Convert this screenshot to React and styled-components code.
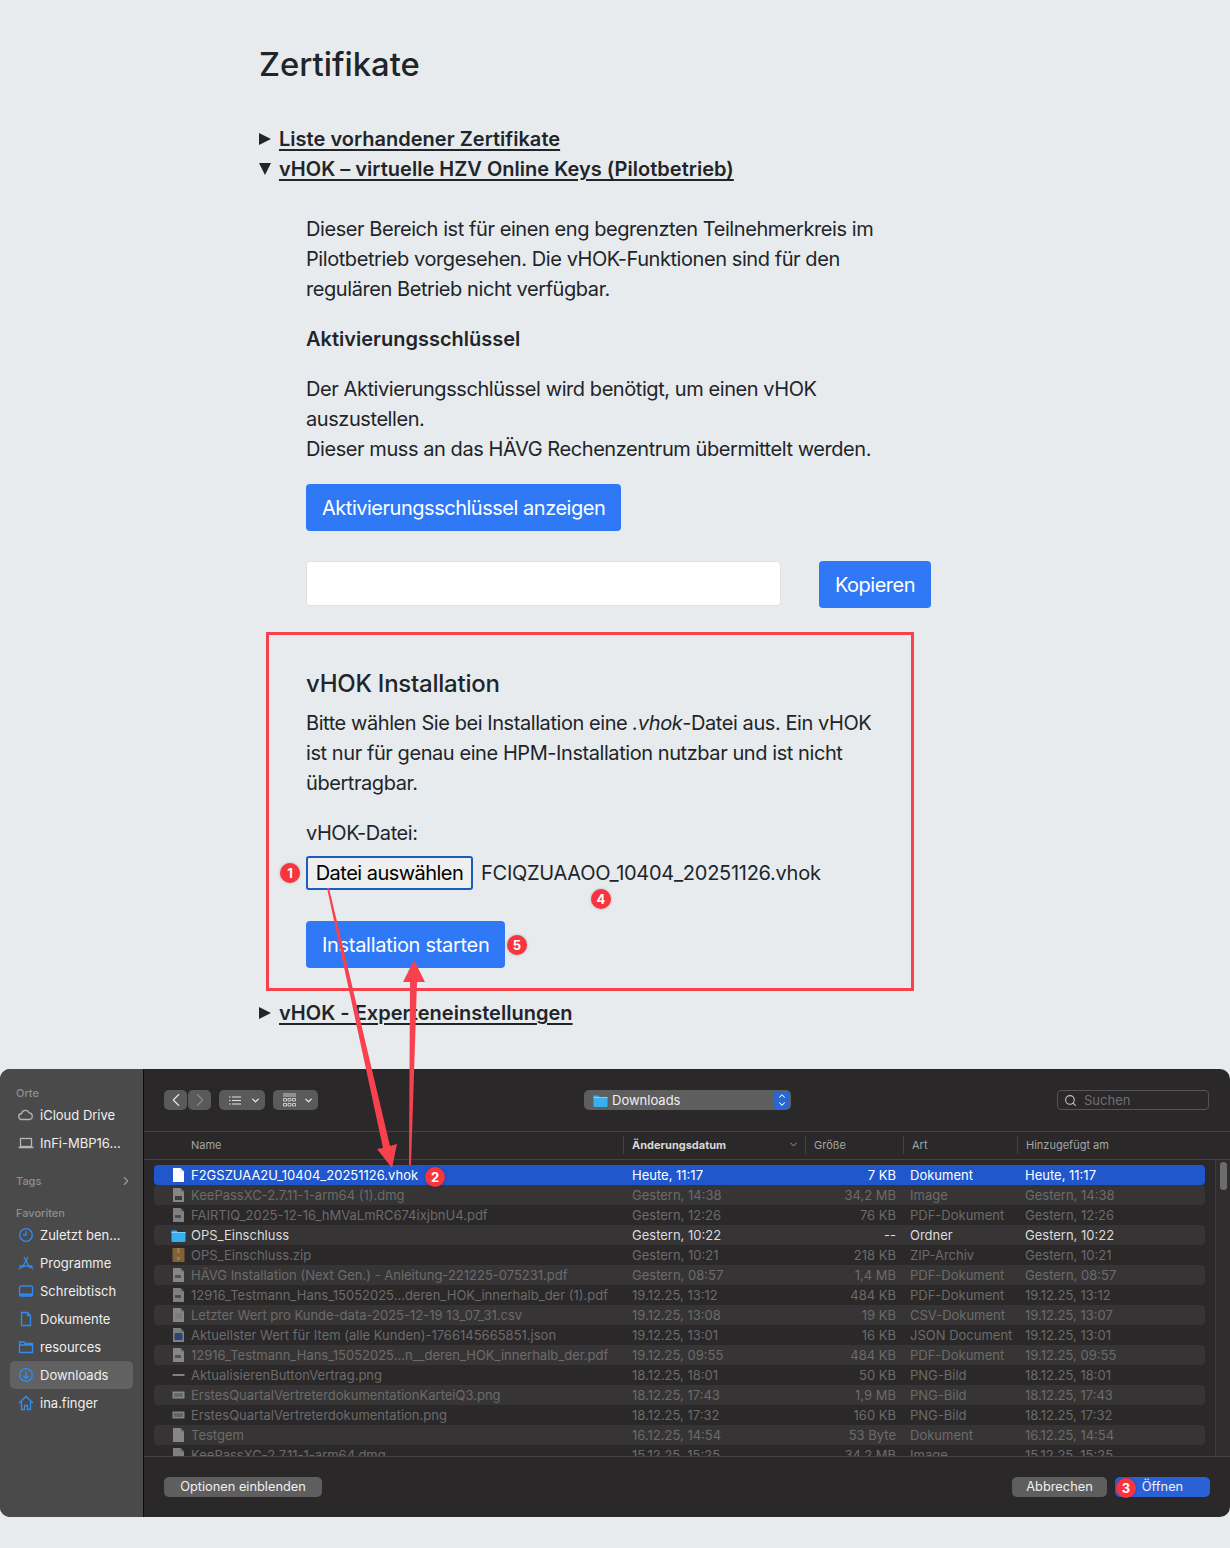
import React from 'react'
import styled, { createGlobalStyle } from 'styled-components'
import { ChevronLeft, ChevronRight, ChevronDown, ChevronUp, Search } from 'lucide-react'

const GlobalStyle = createGlobalStyle`
  html, body {
    margin: 0;
    padding: 0;
    background: #e7ebee;
  }
  * { box-sizing: border-box; }
`

const Page = styled.div`
  position: relative;
  width: 1230px;
  height: 1548px;
  overflow: hidden;
  background: #e7ebee;
  color: #212529;
  font-family: Inter, 'Noto Sans', sans-serif;
  font-size: 20px;
  line-height: 30px;
  letter-spacing: -0.43px;
`

const Content = styled.main`
  width: 672px;
  margin-left: 259px;
  padding-top: 45px;
`

const Title = styled.h1`
  margin: 0 0 41px;
  font-size: 32.8px;
  line-height: 38px;
  font-weight: 500;
  letter-spacing: 0;
`

const Summary = styled.div`
  display: flex;
  align-items: center;
  height: 30px;
  margin-top: ${p => p.$top || 0}px;
  font-weight: 600;
  letter-spacing: 0.02px;
  text-decoration: underline;
  text-underline-offset: 3px;
`

const Triangle = styled.span`
  flex: none;
  width: 20px;
  height: 14px;
  &::before {
    content: '';
    display: block;
    width: 0;
    height: 0;
    ${p => p.$open
      ? `margin-top: 1px; border-left: 6.5px solid transparent; border-right: 6.5px solid transparent; border-top: 12px solid #212529;`
      : `margin-top: 1px; border-top: 6.5px solid transparent; border-bottom: 6.5px solid transparent; border-left: 12px solid #212529;`}
  }
`

const Details = styled.section`
  padding: 30px 0 0 47px;
`

const Para = styled.p`
  max-width: 580px;
  margin: ${p => p.$top || 0}px 0 0;
`

const SubHead = styled.h4`
  margin: 20px 0 0;
  font-size: 20px;
  line-height: 30px;
  font-weight: 600;
  letter-spacing: 0;
`

const Heading = styled.h3`
  margin: ${p => p.$top || 0}px 0 10px;
  font-size: 24px;
  line-height: 29px;
  font-weight: 500;
  letter-spacing: -0.24px;
`

const Button = styled.button`
  display: block;
  height: 47px;
  margin: ${p => p.$top || 0}px 0 0;
  padding: 0 16px;
  border: 0;
  border-radius: 4px;
  background: #2f79f7;
  color: #fff;
  font: inherit;
  letter-spacing: ${p => p.$spacing ?? -0.48}px;
`

const CopyRow = styled.div`
  display: flex;
  align-items: flex-start;
  margin-top: 30px;
`

const KeyInput = styled.div`
  width: 475px;
  height: 45px;
  border: 1px solid #dee2e6;
  border-radius: 4px;
  background: #fff;
`

const CopyButton = styled(Button)`
  width: 112px;
  margin-left: 38px;
  padding: 0;
`

const FileRow = styled.div`
  display: flex;
  align-items: center;
  height: 34px;
  margin-top: 8px;
`

const FileButton = styled.button`
  width: 167px;
  height: 34px;
  padding: 0;
  border: 2px solid #1a5cc0;
  border-radius: 3px;
  background: #efefef;
  color: #000;
  font: inherit;
  letter-spacing: -0.53px;
`

const FileName = styled.span`
  margin-left: 8px;
  letter-spacing: -0.27px;
`

/* file dialog */

const Dialog = styled.div`
  display: flex;
  height: 448px;
  margin-top: 41px;
  overflow: hidden;
  border-radius: 10px;
  background: #2a2829;
  font-size: 13px;
  line-height: 16px;
  letter-spacing: 0;
`

const Sidebar = styled.aside`
  flex: none;
  width: 144px;
  padding: 16px 10px 0;
  border-right: 1px solid #0b0b0b;
  background: #4a4a4a;
  color: #efefef;
`

const SideLabel = styled.div`
  display: flex;
  justify-content: space-between;
  align-items: center;
  height: 16px;
  margin: ${p => p.$top || 0}px 0 0 6px;
  color: #8f8f8f;
  font-size: 11px;
  font-weight: 500;
`

const SideItem = styled.div`
  display: flex;
  align-items: center;
  gap: 6px;
  height: 28px;
  padding-left: 8px;
  border-radius: 5px;
  background: ${p => (p.$active ? '#616161' : 'transparent')};
  white-space: nowrap;
`

const SideIcon = styled.svg`
  flex: none;
  width: 16px;
  height: 16px;
  fill: none;
  stroke: ${p => p.$color || '#2e8df5'};
  stroke-width: 1.3;
`

const Main = styled.div`
  flex: 1;
  min-width: 0;
  display: flex;
  flex-direction: column;
`

const Toolbar = styled.div`
  flex: none;
  display: flex;
  align-items: center;
  height: 63px;
  padding: 0 21px 0 20px;
  border-bottom: 1px solid #444243;
`

const ToolGroup = styled.div`
  display: flex;
  width: ${p => p.$w}px;
  gap: ${p => p.$gap || 0}px;
  margin-left: ${p => p.$left || 0}px;
`

const ToolButton = styled.div`
  display: flex;
  align-items: center;
  justify-content: center;
  gap: ${p => p.$gap || 0}px;
  flex: 1;
  height: 20px;
  padding-left: ${p => (p.$menu ? 6 : 0)}px;
  border-radius: 5px;
  background: #5b5a5a;
  color: ${p => (p.$dim ? '#8a8a8a' : '#e8e8e8')};
`

const Lines = styled.svg`
  flex: none;
  width: ${p => p.$w}px;
  height: ${p => p.$h}px;
  stroke: #e4e4e4;
  fill: none;
`

const PathPopup = styled.div`
  display: flex;
  align-items: center;
  gap: 4px;
  width: 207px;
  height: 20px;
  margin-left: 266px;
  padding-left: 9px;
  border-radius: 5px;
  background: #5f5e5e;
  color: #efefef;
`

const Stepper = styled.div`
  display: flex;
  flex-direction: column;
  align-items: center;
  justify-content: center;
  width: 17px;
  height: 18px;
  margin-left: auto;
  margin-right: 1px;
  border-radius: 4px;
  background: #2a66d0;
  color: #fff;
  line-height: 0;
  svg {
    margin: -1px 0;
  }
`

const SearchBox = styled.div`
  display: flex;
  align-items: center;
  gap: 7px;
  width: 152px;
  height: 20px;
  margin-left: auto;
  padding-left: 6px;
  border: 1px solid #555354;
  border-radius: 4px;
  color: #6f6f6f;
  font-size: 13px;
`

const ColumnHead = styled.div`
  flex: none;
  display: grid;
  grid-template-columns: 47px 432px 182px 98px 114px 1fr;
  height: 28px;
  padding-bottom: 2px;
  align-items: center;
  border-bottom: 1px solid #444243;
  color: #a5a5a5;
  font-size: 11px;
`

const HeadCell = styled.div`
  display: flex;
  align-items: center;
  justify-content: space-between;
  height: 18px;
  padding: 0 6px 0 ${p => (p.$plain ? 0 : 8)}px;
  border-left: ${p => (p.$plain ? 0 : '1px solid #444243')};
  color: ${p => (p.$sorted ? '#d8d8d8' : 'inherit')};
  font-weight: ${p => (p.$sorted ? 700 : 400)};
`

const ListArea = styled.div`
  flex: 1;
  min-height: 0;
  display: flex;
  border-bottom: 1px solid #444243;
`

const Rows = styled.div`
  flex: 1;
  min-width: 0;
  overflow: hidden;
  padding: 5px 10px 0;
`

const Scroller = styled.div`
  flex: none;
  width: 15px;
  padding: 2px 0 0 4px;
  border-left: 1px solid #3e3c3d;
  background: #2f2d2e;
`

const Thumb = styled.div`
  width: 7px;
  height: 28px;
  border-radius: 4px;
  background: #6d6c6c;
`

const Row = styled.div`
  display: grid;
  grid-template-columns: 37px 441px 174px 90px 129px 1fr;
  align-items: center;
  height: 20px;
  border-radius: 4px;
  white-space: nowrap;
  background: ${p => (p.$selected ? '#2157cc' : p.$stripe ? '#363435' : 'transparent')};
  color: ${p => (p.$selected ? '#fff' : p.$folder ? '#dcdcdc' : '#6c6b6b')};
`

const RowIcon = styled.svg`
  display: block;
  flex: none;
  width: 15px;
  height: 16px;
  margin-left: ${p => (p.$flush ? 0 : 17)}px;
  opacity: ${p => (p.$bright ? 1 : 0.5)};
`

const SizeCell = styled.div`
  text-align: right;
`

const KindCell = styled.div`
  padding-left: 14px;
`

const Footer = styled.div`
  flex: none;
  display: flex;
  align-items: center;
  gap: 8px;
  height: 60px;
  padding: 0 20px;
`

const FootButton = styled.div`
  display: flex;
  align-items: center;
  justify-content: center;
  width: ${p => p.$w}px;
  height: 20px;
  padding-bottom: 1px;
  margin-right: ${p => (p.$push ? 'auto' : 0)};
  border-radius: 5px;
  background: ${p => (p.$primary ? '#2b60d6' : '#5f5e5e')};
  color: #f0f0f0;
  font-size: 12.8px;
`

/* red annotations drawn over the page */

const Marks = styled.svg`
  position: absolute;
  inset: 0;
  width: 1230px;
  height: 1548px;
  pointer-events: none;
`

const RedBox = styled.div`
  position: absolute;
  left: 266px;
  top: 632px;
  width: 648px;
  height: 359px;
  border: 3px solid #f8414f;
  pointer-events: none;
`

const Badge = styled.span`
  position: absolute;
  left: ${p => p.$x - 10}px;
  top: ${p => p.$y - 10}px;
  display: flex;
  align-items: center;
  justify-content: center;
  width: 20px;
  height: 20px;
  border-radius: 50%;
  background: #f8343f;
  box-shadow: 0 0 3px rgba(0, 0, 0, 0.25);
  color: #fff;
  font-size: 13px;
  line-height: 1;
  font-weight: 700;
  letter-spacing: 0;
`

function FileIcon({ kind, bright, flush }) {
  if (kind === 'folder') {
    return (
      <RowIcon viewBox="0 0 15 16" $bright $flush={flush}>
        <path d="M0.5 3.5 h5 l1 1.5 h8 v9 a1 1 0 0 1 -1 1 h-12 a1 1 0 0 1 -1 -1 z" fill="#36b0ee" />
        <rect x="0.5" y="5" width="14" height="1" fill="#7cd2f7" />
      </RowIcon>
    )
  }
  if (kind === 'zip') {
    return (
      <RowIcon viewBox="0 0 15 16">
        <rect x="1.5" y="1" width="12" height="14" fill="#d99a45" />
        <rect x="6" y="1" width="3" height="5" fill="#f5d08a" />
        <rect x="6" y="10" width="3" height="3" fill="#f5d08a" />
      </RowIcon>
    )
  }
  if (kind === 'strip') {
    return (
      <RowIcon viewBox="0 0 15 16">
        <rect x="1.5" y="7" width="12" height="2" fill="#d8d8d8" />
      </RowIcon>
    )
  }
  if (kind === 'png') {
    return (
      <RowIcon viewBox="0 0 15 16">
        <rect x="1.5" y="4.5" width="12" height="7" fill="#e0e0e0" />
        <rect x="3" y="6" width="9" height="4" fill="#8fa69a" />
      </RowIcon>
    )
  }
  return (
    <RowIcon viewBox="0 0 15 16" $bright={bright}>
      <path d="M2 1 h7.5 l3.5 3.5 v10.5 h-11 z" fill={bright ? '#fff' : '#d8d8d8'} />
      <path d="M9.5 1 l3.5 3.5 h-3.5 z" fill={bright ? '#c9d6f2' : '#a8a8a8'} />
      {kind === 'pdf' && <rect x="4" y="8" width="6" height="3" fill="#5e6f96" />}
      {kind === 'dmg' && <rect x="4" y="9" width="7" height="4" fill="#444" />}
      {kind === 'csv' && <path d="M4 7 h7 M4 9 h7 M4 11 h7" stroke="#a5a5a5" strokeWidth="0.8" />}
      {kind === 'json' && <rect x="3.5" y="6" width="8" height="7" rx="1" fill="#2a66d0" />}
    </RowIcon>
  )
}

const files = [
  ['doc', 'F2GSZUAA2U_10404_20251126.vhok', 'Heute, 11:17', '7 KB', 'Dokument', 'Heute, 11:17'],
  ['dmg', 'KeePassXC-2.7.11-1-arm64 (1).dmg', 'Gestern, 14:38', '34,2 MB', 'Image', 'Gestern, 14:38'],
  ['pdf', 'FAIRTIQ_2025-12-16_hMVaLmRC674ixjbnU4.pdf', 'Gestern, 12:26', '76 KB', 'PDF-Dokument', 'Gestern, 12:26'],
  ['folder', 'OPS_Einschluss', 'Gestern, 10:22', '--', 'Ordner', 'Gestern, 10:22'],
  ['zip', 'OPS_Einschluss.zip', 'Gestern, 10:21', '218 KB', 'ZIP-Archiv', 'Gestern, 10:21'],
  ['pdf', 'HÄVG Installation (Next Gen.) - Anleitung-221225-075231.pdf', 'Gestern, 08:57', '1,4 MB', 'PDF-Dokument', 'Gestern, 08:57'],
  ['pdf', '12916_Testmann_Hans_15052025...deren_HOK_innerhalb_der (1).pdf', '19.12.25, 13:12', '484 KB', 'PDF-Dokument', '19.12.25, 13:12'],
  ['csv', 'Letzter Wert pro Kunde-data-2025-12-19 13_07_31.csv', '19.12.25, 13:08', '19 KB', 'CSV-Dokument', '19.12.25, 13:07'],
  ['json', 'Aktuellster Wert für Item (alle Kunden)-1766145665851.json', '19.12.25, 13:01', '16 KB', 'JSON Document', '19.12.25, 13:01'],
  ['pdf', '12916_Testmann_Hans_15052025...n__deren_HOK_innerhalb_der.pdf', '19.12.25, 09:55', '484 KB', 'PDF-Dokument', '19.12.25, 09:55'],
  ['strip', 'AktualisierenButtonVertrag.png', '18.12.25, 18:01', '50 KB', 'PNG-Bild', '18.12.25, 18:01'],
  ['png', 'ErstesQuartalVertreterdokumentationKarteiQ3.png', '18.12.25, 17:43', '1,9 MB', 'PNG-Bild', '18.12.25, 17:43'],
  ['png', 'ErstesQuartalVertreterdokumentation.png', '18.12.25, 17:32', '160 KB', 'PNG-Bild', '18.12.25, 17:32'],
  ['doc', 'Testgem', '16.12.25, 14:54', '53 Byte', 'Dokument', '16.12.25, 14:54'],
  ['dmg', 'KeePassXC-2.7.11-1-arm64.dmg', '15.12.25, 15:25', '34,2 MB', 'Image', '15.12.25, 15:25'],
]

function FileDialog() {
  return (
    <Dialog>
      <Sidebar>
        <SideLabel>Orte</SideLabel>
        <SideItem>
          <SideIcon viewBox="0 0 16 16" $color="#b5b5b5">
            <path d="M4 12.5 a3 3 0 0 1 -.4 -6 a4 4 0 0 1 7.6 -.6 a3.4 3.4 0 0 1 .8 6.6 z" />
          </SideIcon>
          iCloud Drive
        </SideItem>
        <SideItem>
          <SideIcon viewBox="0 0 16 16" $color="#b5b5b5">
            <rect x="2.5" y="3.5" width="11" height="8" />
            <path d="M0.5 12.5 h15" />
          </SideIcon>
          InFi-MBP16...
        </SideItem>
        <SideLabel $top={16}>
          Tags
          <ChevronRight size={14} color="#9a9a9a" />
        </SideLabel>
        <SideLabel $top={16}>Favoriten</SideLabel>
        <SideItem>
          <SideIcon viewBox="0 0 16 16">
            <circle cx="8" cy="8" r="6.3" />
            <path d="M8 4 v4 h-3" />
          </SideIcon>
          Zuletzt ben...
        </SideItem>
        <SideItem>
          <SideIcon viewBox="0 0 16 16">
            <path d="M6 2 L12 13 M10 2 L4 13 M1.5 11 h13 M1 14 l2 -2 M15 14 l-2 -2" />
          </SideIcon>
          Programme
        </SideItem>
        <SideItem>
          <SideIcon viewBox="0 0 16 16">
            <rect x="1.5" y="3" width="13" height="10" rx="1.5" />
            <rect x="2" y="10.5" width="12" height="2" fill="#2e8df5" stroke="none" />
          </SideIcon>
          Schreibtisch
        </SideItem>
        <SideItem>
          <SideIcon viewBox="0 0 16 16">
            <path d="M3.5 1.5 h6 l3 3 v10 h-9 z M9.5 1.5 v3 h3" />
          </SideIcon>
          Dokumente
        </SideItem>
        <SideItem>
          <SideIcon viewBox="0 0 16 16">
            <path d="M1.5 3 h4.5 l1 1.5 h7.5 v9 h-13 z M1.5 6 h13" />
          </SideIcon>
          resources
        </SideItem>
        <SideItem $active>
          <SideIcon viewBox="0 0 16 16">
            <circle cx="8" cy="8" r="6.3" />
            <path d="M8 4.5 v7 M5.5 9 l2.5 2.5 l2.5 -2.5" />
          </SideIcon>
          Downloads
        </SideItem>
        <SideItem>
          <SideIcon viewBox="0 0 16 16">
            <path d="M1 8 L8 1.5 L15 8 M3.5 6.5 v8 h3 v-4 h3 v4 h3 v-8" />
          </SideIcon>
          ina.finger
        </SideItem>
      </Sidebar>
      <Main>
        <Toolbar>
          <ToolGroup $w={47} $gap={1}>
            <ToolButton><ChevronLeft size={22} strokeWidth={1.2} /></ToolButton>
            <ToolButton $dim><ChevronRight size={22} strokeWidth={1.2} /></ToolButton>
          </ToolGroup>
          <ToolGroup $w={46} $left={8}>
            <ToolButton $menu $gap={9}>
              <Lines viewBox="0 0 12 9" $w={12} $h={9}>
                <path d="M3 1 h9 M3 4.5 h9 M3 8 h9 M0 1 h1.5 M0 4.5 h1.5 M0 8 h1.5" />
              </Lines>
              <ChevronDown size={11} strokeWidth={3} />
            </ToolButton>
          </ToolGroup>
          <ToolGroup $w={45} $left={8}>
            <ToolButton $menu $gap={6.5}>
              <Lines viewBox="0 0 13 14" $w={13} $h={14} strokeWidth="0.8">
                <path d="M0 1 h13 M0 3 h13 M0.5 5.5 h3 v2.5 h-3 z M5 5.5 h3 v2.5 h-3 z M9.5 5.5 h3 v2.5 h-3 z M0.5 10.5 h3 v2.5 h-3 z M5 10.5 h3 v2.5 h-3 z M9.5 10.5 h3 v2.5 h-3 z" />
              </Lines>
              <ChevronDown size={11} strokeWidth={3} />
            </ToolButton>
          </ToolGroup>
          <PathPopup>
            <FileIcon kind="folder" flush />
            Downloads
            <Stepper>
              <ChevronUp size={10} strokeWidth={2.5} />
              <ChevronDown size={10} strokeWidth={2.5} />
            </Stepper>
          </PathPopup>
          <SearchBox>
            <Search size={13} color="#c4c4c4" />
            Suchen
          </SearchBox>
        </Toolbar>
        <ColumnHead>
          <span />
          <HeadCell $plain>Name</HeadCell>
          <HeadCell $sorted>
            Änderungsdatum
            <ChevronDown size={11} color="#a5a5a5" />
          </HeadCell>
          <HeadCell>Größe</HeadCell>
          <HeadCell>Art</HeadCell>
          <HeadCell>Hinzugefügt am</HeadCell>
        </ColumnHead>
        <ListArea>
          <Rows>
            {files.map(([kind, name, date, size, type, added], i) => (
              <Row key={name} $selected={i === 0} $stripe={i % 2 === 1} $folder={kind === 'folder'}>
                <FileIcon kind={kind} bright={i === 0} />
                <div>{name}</div>
                <div>{date}</div>
                <SizeCell>{size}</SizeCell>
                <KindCell>{type}</KindCell>
                <div>{added}</div>
              </Row>
            ))}
          </Rows>
          <Scroller>
            <Thumb />
          </Scroller>
        </ListArea>
        <Footer>
          <FootButton $w={158} $push>Optionen einblenden</FootButton>
          <FootButton $w={95}>Abbrechen</FootButton>
          <FootButton $w={95} $primary>Öffnen</FootButton>
        </Footer>
      </Main>
    </Dialog>
  )
}

export default function App() {
  return (
    <Page>
      <GlobalStyle />
      <Content>
        <Title>Zertifikate</Title>
        <Summary><Triangle />Liste vorhandener Zertifikate</Summary>
        <Summary><Triangle $open />vHOK – virtuelle HZV Online Keys (Pilotbetrieb)</Summary>
        <Details>
          <Para>Dieser Bereich ist für einen eng begrenzten Teilnehmerkreis im Pilotbetrieb vorgesehen. Die vHOK-Funktionen sind für den regulären Betrieb nicht verfügbar.</Para>
          <SubHead>Aktivierungsschlüssel</SubHead>
          <Para $top={20}>
            Der Aktivierungsschlüssel wird benötigt, um einen vHOK auszustellen.
            <br />
            Dieser muss an das HÄVG Rechenzentrum übermittelt werden.
          </Para>
          <Button $top={20}>Aktivierungsschlüssel anzeigen</Button>
          <CopyRow>
            <KeyInput />
            <CopyButton>Kopieren</CopyButton>
          </CopyRow>
          <Heading $top={61}>vHOK Installation</Heading>
          <Para>Bitte wählen Sie bei Installation eine <em>.vhok</em>-Datei aus. Ein vHOK ist nur für genau eine HPM-Installation nutzbar und ist nicht übertragbar.</Para>
          <Para $top={20}>vHOK-Datei:</Para>
          <FileRow>
            <FileButton>Datei auswählen</FileButton>
            <FileName>FCIQZUAAOO_10404_20251126.vhok</FileName>
          </FileRow>
          <Button $top={31} $spacing={-0.3}>Installation starten</Button>
        </Details>
        <Summary $top={30}><Triangle />vHOK - Experteneinstellungen</Summary>
      </Content>
      <FileDialog />
      <RedBox />
      <Marks viewBox="0 0 1230 1548">
        <polygon points="327,888 329,888 390,1146 397,1144 392,1168 377,1149 383,1148" fill="#f8414f" />
        <polygon points="409,1165 411,1165 417,982 425,982 414,960 403,982 410,982" fill="#f8414f" />
      </Marks>
      <Badge $x={290} $y={873}>1</Badge>
      <Badge $x={435} $y={1177}>2</Badge>
      <Badge $x={1126} $y={1488}>3</Badge>
      <Badge $x={601} $y={899}>4</Badge>
      <Badge $x={517} $y={945}>5</Badge>
    </Page>
  )
}
